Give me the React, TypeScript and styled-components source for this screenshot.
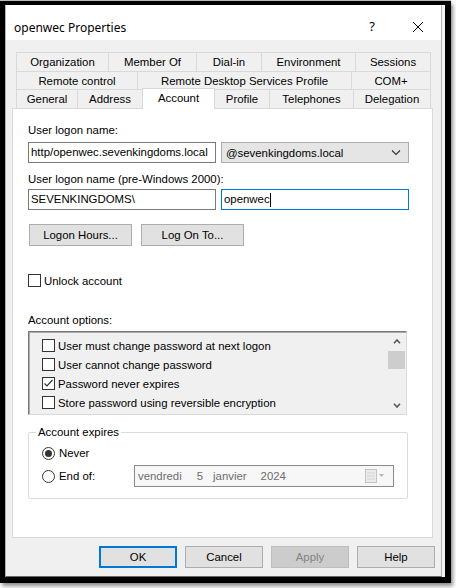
import React from "react";
import styled, { createGlobalStyle } from "styled-components";

const GlobalStyle = createGlobalStyle`
  html, body { margin: 0; padding: 0; background: #ffffff; }
  body {
    font-family: "Liberation Sans", Arial, sans-serif;
    font-size: 11.4px;
    color: #000;
  }
  #root { width: 456px; height: 588px; overflow: hidden; }
  * { box-sizing: border-box; }
`;

const Page = styled.div`
  width: 456px;
  height: 588px;
  padding-top: 1px;
  background: #ffffff;
`;

const Frame = styled.div`
  width: 451px;
  height: 582px;
  border-style: solid;
  border-color: #000;
  border-width: 4px 6px 6px 5px;
  background: #f4f4f4;
  box-shadow: 2px 3px 4px rgba(0, 0, 0, 0.45), 0 -1px 1px rgba(0, 0, 0, 0.25);
  display: flex;
`;

const Dialog = styled.div`
  width: 437px;
  height: 100%;
  border: 1px solid #b4b4b4;
  border-top-color: #ffffff;
  border-bottom-color: #6a6a6a;
  background: #f0f0f0;
  display: flex;
  flex-direction: column;
`;

const TitleBar = styled.div`
  height: 34px;
  flex: none;
  background: #ffffff;
  display: flex;
  align-items: center;
  padding: 8px 17px 0 8px;
`;

const Title = styled.span`
  font-family: "Noto Sans", "Open Sans", sans-serif;
  font-size: 12px;
  color: #000;
`;

const HelpGlyph = styled.span`
  margin-left: auto;
  font-family: "Noto Sans", sans-serif;
  font-size: 13px;
  color: #000;
  margin-right: 37px;
  margin-top: -2px;
`;

const CloseIcon = styled.svg`
  display: block;
  width: 12px;
  height: 12px;
`;

const Body = styled.div`
  padding: 12px 8px 0 6px;
  display: flex;
  flex-direction: column;
`;

const Tabs = styled.div`
  margin: 0 2px 0 4px;
  display: flex;
  flex-direction: column;
`;

const TabRow = styled.div<{ $h: number }>`
  height: ${(p) => p.$h}px;
  display: flex;
`;

const Tab = styled.div<{ $w: number; $first?: boolean; $last?: boolean; $active?: boolean }>`
  width: ${(p) => p.$w}px;
  flex: ${(p) => (p.$last ? "1 0 auto" : "none")};
  border-top: 1px solid #d9d9d9;
  border-right: 1px solid #d9d9d9;
  border-left: ${(p) => (p.$first || p.$active ? "1px solid #d9d9d9" : "none")};
  background: ${(p) => (p.$active ? "#ffffff" : "#f0f0f0")};
  margin: ${(p) => (p.$active ? "-1px 0 -1px -1px" : "0")};
  position: ${(p) => (p.$active ? "relative" : "static")};
  z-index: ${(p) => (p.$active ? 1 : "auto")};
  display: flex;
  align-items: center;
  justify-content: center;
  padding-bottom: ${(p) => (p.$active ? 3 : 0)}px;
  white-space: nowrap;
`;

const Panel = styled.div`
  height: 430px;
  background: #ffffff;
  border: 1px solid #d9d9d9;
  padding: 14px 23px 0 15px;
  display: flex;
  flex-direction: column;
`;

const Label = styled.div<{ $mt: number }>`
  line-height: 14px;
  margin-top: ${(p) => p.$mt}px;
  white-space: nowrap;
`;

const FieldRow = styled.div<{ $mt: number }>`
  display: flex;
  gap: 5px;
  margin-top: ${(p) => p.$mt}px;
`;

const TextBox = styled.div<{ $focused?: boolean }>`
  width: 188px;
  height: 21px;
  background: #ffffff;
  border: 1px solid ${(p) => (p.$focused ? "#0078d7" : "#7a7a7a")};
  padding: 0 2px;
  line-height: 19px;
  white-space: nowrap;
  overflow: hidden;
  display: flex;
  align-items: center;
`;

const Caret = styled.span`
  display: inline-block;
  width: 1px;
  height: 14px;
  background: #000;
`;

const Combo = styled.div`
  width: 188px;
  height: 21px;
  background: #e5e5e5;
  border: 1px solid #acacac;
  padding: 0 7px 0 4px;
  display: flex;
  align-items: center;
  justify-content: space-between;
`;

const ChevronIcon = styled.svg`
  display: block;
  width: 10px;
  height: 6px;
`;

const ButtonRow = styled.div<{ $mt: number }>`
  display: flex;
  gap: 9px;
  margin-top: ${(p) => p.$mt}px;
  margin-left: 1px;
`;

const PushButton = styled.div<{ $w: number; $primary?: boolean; $disabled?: boolean }>`
  width: ${(p) => p.$w}px;
  height: 22px;
  background: ${(p) => (p.$disabled ? "#cccccc" : "#e1e1e1")};
  border: 1px solid ${(p) => (p.$primary ? "#0078d7" : p.$disabled ? "#bfbfbf" : "#adadad")};
  box-shadow: ${(p) => (p.$primary ? "inset 0 0 0 1px #0078d7" : "none")};
  color: ${(p) => (p.$disabled ? "#838383" : "#000")};
  display: flex;
  align-items: center;
  justify-content: center;
  white-space: nowrap;
`;

const CheckRow = styled.div<{ $mt?: number }>`
  display: flex;
  align-items: center;
  gap: 3px;
  height: 13px;
  margin-top: ${(p) => p.$mt ?? 0}px;
  white-space: nowrap;
`;

const Box = styled.div`
  width: 13px;
  height: 13px;
  flex: none;
  background: #ffffff;
  border: 1px solid #333333;
  display: flex;
  align-items: center;
  justify-content: center;
`;

const ListBox = styled.div`
  margin-top: 4px;
  width: 379px;
  height: 84px;
  background: #f0f0f0;
  border: 1px solid;
  border-color: #7a7a7a #dadada #dadada #7a7a7a;
  box-shadow: inset 1px 1px 0 #a9a9a9;
  display: flex;
`;

const ListItems = styled.div`
  flex: 1;
  padding: 4px 0 0 13px;
  display: flex;
  flex-direction: column;
`;

const ListItem = styled.div`
  height: 19px;
  display: flex;
  align-items: center;
  gap: 3px;
  white-space: nowrap;
`;

const ScrollBar = styled.div`
  width: 17px;
  margin-right: 1px;
  display: flex;
  flex-direction: column;
`;

const ScrollArrow = styled.div<{ $h: number }>`
  height: ${(p) => p.$h}px;
  display: flex;
  align-items: center;
  justify-content: center;
`;

const Thumb = styled.div`
  height: 18px;
  background: #cdcdcd;
`;

const Track = styled.div`
  flex: 1;
`;

const Group = styled.fieldset`
  margin: 10px 0 0 0;
  width: 380px;
  border: 1px solid #dcdcdc;
  border-radius: 2px;
  padding: 6px 13px 11px 13px;
  display: flex;
  flex-direction: column;
  gap: 4px;
`;

const Legend = styled.legend`
  margin-left: -6px;
  padding: 0 2px;
  line-height: 14px;
`;

const RadioRow = styled.div<{ $h: number }>`
  height: ${(p) => p.$h}px;
  display: flex;
  align-items: center;
  gap: 4px;
  white-space: nowrap;
`;

const Radio = styled.div<{ $on?: boolean }>`
  width: 13px;
  height: 13px;
  flex: none;
  border-radius: 50%;
  border: 1px solid #333333;
  background: #ffffff;
  display: flex;
  align-items: center;
  justify-content: center;
  &::after {
    content: "";
    display: ${(p) => (p.$on ? "block" : "none")};
    width: 7px;
    height: 7px;
    border-radius: 50%;
    background: #333333;
  }
`;

const DatePicker = styled.div`
  margin-left: auto;
  width: 260px;
  height: 22px;
  border: 1px solid #8a8a8a;
  background: #f7f7f7;
  color: #6d6d6d;
  padding: 0 8px 0 3px;
  display: flex;
  align-items: center;
`;

const Segment = styled.span<{ $ml: number }>`
  margin-left: ${(p) => p.$ml}px;
`;

const CalendarIcon = styled.svg`
  margin-left: auto;
  display: block;
  width: 20px;
  height: 14px;
`;

const Footer = styled.div`
  margin-top: 8px;
  padding-right: 6px;
  display: flex;
  justify-content: flex-end;
  gap: 8px;
`;

const Check = () => (
  <svg width="11" height="11" viewBox="0 0 11 11">
    <polyline points="1.5,5.5 4,8 9.5,2" fill="none" stroke="#333" strokeWidth="1.2" />
  </svg>
);

const ScrollChevron = ({ up }: { up?: boolean }) => (
  <svg width="8" height="5" viewBox="0 0 8 5">
    <polyline
      points={up ? "1,4.2 4,1 7,4.2" : "1,0.8 4,4 7,0.8"}
      fill="none"
      stroke="#555"
      strokeWidth="1.6"
    />
  </svg>
);

const tabRows = [
  {
    h: 19,
    tabs: [
      { t: "Organization", w: 93 },
      { t: "Member Of", w: 88 },
      { t: "Dial-in", w: 65 },
      { t: "Environment", w: 94 },
      { t: "Sessions", w: 74 },
    ],
  },
  {
    h: 18,
    tabs: [
      { t: "Remote control", w: 122 },
      { t: "Remote Desktop Services Profile", w: 214 },
      { t: "COM+", w: 78 },
    ],
  },
  {
    h: 19,
    tabs: [
      { t: "General", w: 62 },
      { t: "Address", w: 65 },
      { t: "Account", w: 73, active: true },
      { t: "Profile", w: 55 },
      { t: "Telephones", w: 84 },
      { t: "Delegation", w: 76 },
    ],
  },
];

const options = [
  { t: "User must change password at next logon", c: false },
  { t: "User cannot change password", c: false },
  { t: "Password never expires", c: true },
  { t: "Store password using reversible encryption", c: false },
];

export default function App() {
  return (
    <Page>
      <GlobalStyle />
      <Frame>
        <Dialog>
          <TitleBar>
            <Title>openwec Properties</Title>
            <HelpGlyph>?</HelpGlyph>
            <CloseIcon viewBox="0 0 12 12">
              <line x1="1" y1="1" x2="11" y2="11" stroke="#000" strokeWidth="1" />
              <line x1="11" y1="1" x2="1" y2="11" stroke="#000" strokeWidth="1" />
            </CloseIcon>
          </TitleBar>
          <Body>
            <Tabs>
              {tabRows.map((row, ri) => (
                <TabRow key={ri} $h={row.h}>
                  {row.tabs.map((tab, ti) => (
                    <Tab
                      key={tab.t}
                      $w={tab.w}
                      $first={ti === 0}
                      $last={ti === row.tabs.length - 1}
                      $active={"active" in tab && tab.active}
                    >
                      {tab.t}
                    </Tab>
                  ))}
                </TabRow>
              ))}
            </Tabs>
            <Panel>
              <Label $mt={0}>User logon name:</Label>
              <FieldRow $mt={5}>
                <TextBox>http/openwec.sevenkingdoms.local</TextBox>
                <Combo>
                  <span>@sevenkingdoms.local</span>
                  <ChevronIcon viewBox="0 0 10 6">
                    <polyline points="1,0.5 5,4.5 9,0.5" fill="none" stroke="#333" strokeWidth="1.1" />
                  </ChevronIcon>
                </Combo>
              </FieldRow>
              <Label $mt={9}>User logon name (pre-Windows 2000):</Label>
              <FieldRow $mt={3}>
                <TextBox>SEVENKINGDOMS\</TextBox>
                <TextBox $focused>
                  openwec
                  <Caret />
                </TextBox>
              </FieldRow>
              <ButtonRow $mt={14}>
                <PushButton $w={103}>Logon Hours...</PushButton>
                <PushButton $w={103}>Log On To...</PushButton>
              </ButtonRow>
              <CheckRow $mt={28}>
                <Box />
                <span>Unlock account</span>
              </CheckRow>
              <Label $mt={26}>Account options:</Label>
              <ListBox>
                <ListItems>
                  {options.map((o) => (
                    <ListItem key={o.t}>
                      <Box>{o.c && <Check />}</Box>
                      <span>{o.t}</span>
                    </ListItem>
                  ))}
                </ListItems>
                <ScrollBar>
                  <ScrollArrow $h={19}>
                    <ScrollChevron up />
                  </ScrollArrow>
                  <Thumb />
                  <Track />
                  <ScrollArrow $h={18}>
                    <ScrollChevron />
                  </ScrollArrow>
                </ScrollBar>
              </ListBox>
              <Group>
                <Legend>Account expires</Legend>
                <RadioRow $h={16}>
                  <Radio $on />
                  <span>Never</span>
                </RadioRow>
                <RadioRow $h={22}>
                  <Radio />
                  <span>End of:</span>
                  <DatePicker>
                    <Segment $ml={0}>vendredi</Segment>
                    <Segment $ml={15}>5</Segment>
                    <Segment $ml={10}>janvier</Segment>
                    <Segment $ml={14}>2024</Segment>
                    <CalendarIcon viewBox="0 0 20 14">
                      <rect x="0.5" y="0.5" width="11" height="13" fill="#ececec" stroke="#c4c4c4" />
                      <line x1="2" y1="4" x2="10" y2="4" stroke="#d2d2d2" />
                      <line x1="2" y1="7" x2="10" y2="7" stroke="#d2d2d2" />
                      <line x1="2" y1="10" x2="10" y2="10" stroke="#d2d2d2" />
                      <polygon points="14,5 19,5 16.5,8" fill="#b4b4b4" />
                    </CalendarIcon>
                  </DatePicker>
                </RadioRow>
              </Group>
            </Panel>
          </Body>
          <Footer>
            <PushButton $w={78} $primary>OK</PushButton>
            <PushButton $w={78}>Cancel</PushButton>
            <PushButton $w={78} $disabled>Apply</PushButton>
            <PushButton $w={78}>Help</PushButton>
          </Footer>
        </Dialog>
      </Frame>
    </Page>
  );
}
